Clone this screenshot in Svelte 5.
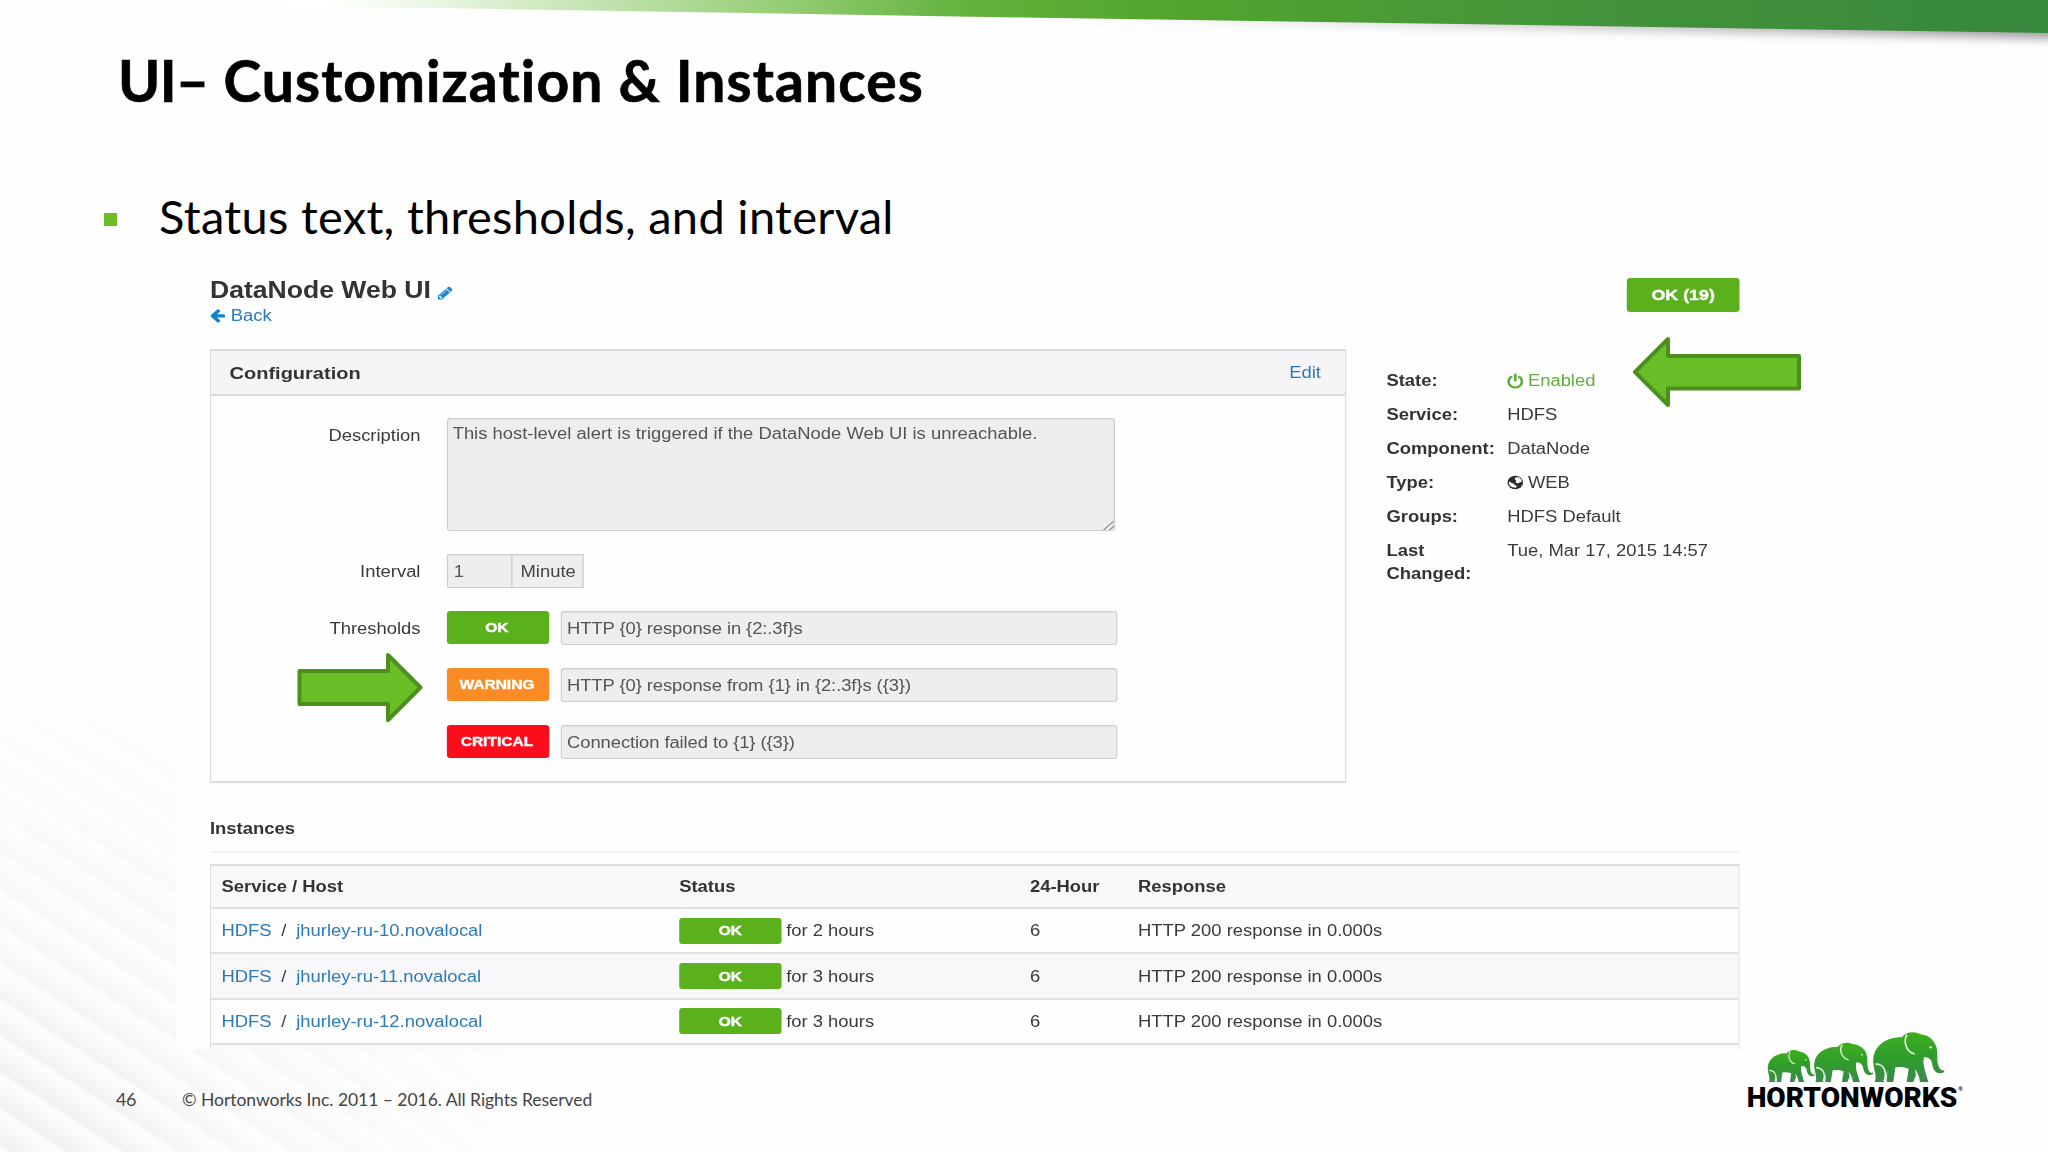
<script>
  // alert definition properties
  const details = [
    { label: 'State:', value: 'Enabled', icon: 'power' },
    { label: 'Service:', value: 'HDFS' },
    { label: 'Component:', value: 'DataNode' },
    { label: 'Type:', value: 'WEB', icon: 'globe' },
    { label: 'Groups:', value: 'HDFS Default' },
    { label: 'Last Changed:', value: 'Tue, Mar 17, 2015 14:57' }
  ];

  const thresholds = [
    { level: 'OK', cls: 'ok', text: 'HTTP {0} response in {2:.3f}s' },
    { level: 'WARNING', cls: 'warning', text: 'HTTP {0} response from {1} in {2:.3f}s ({3})' },
    { level: 'CRITICAL', cls: 'critical', text: 'Connection failed to {1} ({3})' }
  ];

  const instances = [
    { service: 'HDFS', host: 'jhurley-ru-10.novalocal', age: 'for 2 hours', count: 6, response: 'HTTP 200 response in 0.000s' },
    { service: 'HDFS', host: 'jhurley-ru-11.novalocal', age: 'for 3 hours', count: 6, response: 'HTTP 200 response in 0.000s' },
    { service: 'HDFS', host: 'jhurley-ru-12.novalocal', age: 'for 3 hours', count: 6, response: 'HTTP 200 response in 0.000s' }
  ];

  // small, medium and large elephant of the logo
  const herd = [
    'translate(-160 78) scale(.66 .64)',
    'translate(-99 46.5) scale(.83 .79)',
    'translate(0 2)'
  ];
</script>

<div class="slide">
  <div class="stripes"></div>
  <svg class="band" viewBox="0 0 2048 60" width="2048" height="60">
    <defs>
      <linearGradient id="bandFill" x1="0" x2="1">
        <stop offset=".16" stop-color="#fff" />
        <stop offset=".22" stop-color="#e6f4de" />
        <stop offset=".3" stop-color="#bfe2aa" />
        <stop offset=".39" stop-color="#91cb70" />
        <stop offset=".46" stop-color="#68b544" />
        <stop offset=".5" stop-color="#5cae35" />
        <stop offset=".57" stop-color="#52a52e" />
        <stop offset=".75" stop-color="#45953a" />
        <stop offset="1" stop-color="#37873d" />
      </linearGradient>
      <linearGradient id="shadeFill" x1="0" x2="1">
        <stop offset=".15" stop-color="#777" stop-opacity="0" />
        <stop offset="1" stop-color="#6c666e" stop-opacity=".65" />
      </linearGradient>
      <filter id="soft" x="-5%" y="-100%" width="110%" height="300%"><feGaussianBlur stdDeviation="5" /></filter>
    </defs>
    <path d="M900 0H2060V39L900 18z" fill="url(#shadeFill)" filter="url(#soft)" />
    <path d="M0 0H2048V33L1024 17.500L0 1z" fill="url(#bandFill)" />
  </svg>

  <h1><span>UI–</span> Customization &amp; Instances</h1>
  <p class="bullet"><i></i><span>Status text, thresholds, and interval</span></p>

  <section class="shot">
    <div class="panel">
      <header class="top">
        <div>
          <h2>
            DataNode Web UI
            <svg viewBox="0 100 1536 1600" width="13" height="16"><path fill="#1c87cf" fill-rule="evenodd" d="M363 1536l91-91-235-235-91 91v107h128v128h107zm523-928q0-22-22-22-10 0-17 7l-542 542q-7 7-7 17 0 22 22 22 10 0 17-7l542-542q7-7 7-17zm-54-192l416 416-832 832h-416v-416zm683 96q0 53-37 90l-166 166-416-416 166-165q36-38 90-38 53 0 91 38l235 234q37 39 37 91z" /></svg>
          </h2>
          <a class="back" href="#back">
            <svg viewBox="0 250 1536 1450" width="13" height="14"><path fill="#0f84cd" d="M1536 896v128q0 53-32.500 90.500t-84.500 37.500h-704l293 294q38 36 38 90t-38 90l-75 76q-37 37-90 37-52 0-91-37l-651-652q-37-37-37-90 0-52 37-91l651-650q38-38 91-38 52 0 90 38l75 74q38 38 38 91t-38 91l-293 293h704q52 0 84.500 37.500t32.500 90.500z" /></svg>
            Back
          </a>
        </div>
        <span class="badge total">OK (19)</span>
      </header>

      <div class="columns">
        <div class="box">
          <div class="box-head"><h3>Configuration</h3><a href="#edit">Edit</a></div>
          <div class="form">
            <div class="row first">
              <span class="label">Description</span>
              <div class="field area">
                This host-level alert is triggered if the DataNode Web UI is unreachable.
                <svg class="grip" viewBox="0 0 10 10" width="10" height="10"><path d="M1 10L10 1M6 10L10 6" stroke="#777" fill="none" /></svg>
              </div>
            </div>
            <div class="row interval">
              <span class="label">Interval</span>
              <div class="field num">1</div>
              <div class="field unit">Minute</div>
            </div>
            {#each thresholds as t, i}
              <div class="row threshold">
                <span class="label">{i === 0 ? 'Thresholds' : ''}</span>
                <span class="badge {t.cls}">{t.level}</span>
                <div class="field text">{t.text}</div>
              </div>
            {/each}
          </div>
        </div>

        <dl>
          {#each details as d}
            <dt>{d.label}</dt>
            <dd class:enabled={d.icon === 'power'}>
              {#if d.icon === 'power'}
                <svg viewBox="0 0 1536 1664" width="14" height="16"><path fill="currentColor" d="M1536 896q0 156-61 298t-164 245-245 164-298 61-298-61-245-164-164-245-61-298q0-182 80.500-343t226.500-270q43-32 95.500-25t83.500 50q32 42 24.500 94.500t-49.500 84.500q-98 74-151.500 181t-53.500 228q0 104 40.500 198.500t109.500 163.500 163.500 109.500 198.500 40.500 198.500-40.500 163.500-109.500 109.500-163.500 40.500-198.500q0-121-53.500-228t-151.500-181q-42-32-49.500-84.500t24.500-94.500q31-43 84-50t95 25q146 109 226.500 270t80.500 343zm-640-768v640q0 52-38 90t-90 38-90-38-38-90v-640q0-52 38-90t90-38 90 38 38 90z" /></svg>
              {:else if d.icon === 'globe'}
                <svg viewBox="0 0 16 16" width="14" height="15">
                  <circle cx="8" cy="8" r="7.800" fill="#2e2e30" />
                  <path fill="#fff" d="M8 2.200L11.500 2L14 4.600L14.500 7.500L12.500 7.600L10.800 9.200L8.300 8L9 5.600L7.600 4.600zM1.700 6.800L3.600 8L6.500 9.300L7.500 10.800L9.800 12.200L8.500 14L5.400 13.500L3 12L1.700 9.400z" />
                </svg>
              {/if}
              {d.value}
            </dd>
          {/each}
        </dl>
      </div>

      <h4>Instances</h4>
      <div class="table">
        <div class="tr th"><span>Service / Host</span><span>Status</span><span>24-Hour</span><span>Response</span></div>
        {#each instances as r}
          <div class="tr">
            <span><a href="#service">{r.service}</a><em>/</em><a href="#host">{r.host}</a></span>
            <span class="status"><b class="badge small">OK</b>{r.age}</span>
            <span>{r.count}</span>
            <span>{r.response}</span>
          </div>
        {/each}
        <div class="cut"></div>
      </div>
    </div>
  </section>

  <footer>
    <span class="page">46</span>
    <span class="copy">© Hortonworks Inc. 2011 – 2016. All Rights Reserved</span>
    <svg class="logo" viewBox="75 55 690 270" width="230" height="90">
      <defs>
        <linearGradient id="hide" x1="0" y1="0" x2="0" y2="1">
          <stop offset="0" stop-color="#3eae1c" />
          <stop offset=".5" stop-color="#2f9d2b" />
          <stop offset="1" stop-color="#3a8a4c" />
        </linearGradient>
      </defs>
      {#each herd as place}
        <g transform={place}>
          <path fill="url(#hide)" d="M464 212C474 192 456 168 460 140C466 100 500 78 546 78C556 62 582 58 602 69C634 72 654 98 652 132C651 156 656 180 672 177L673 182C656 192 640 182 637 160C635 145 626 136 612 138C606 160 618 186 625 212H600C598 196 592 182 584 174L588 190L580 212H560L566 172C552 166 538 166 526 168L520 212H500L502 178L494 212z" />
          <path fill="none" stroke="#e9f7dd" stroke-width="5" d="M561 70C548 92 560 122 584 128M466 158C494 158 502 184 492 210" />
          <circle cx="632" cy="108" r="3.500" fill="#e9f7dd" />
        </g>
      {/each}
      <text x="80" y="290" textLength="632" lengthAdjust="spacingAndGlyphs">HORTONWORKS</text>
      <text class="reg" x="715" y="242">®</text>
    </svg>
  </footer>

  <!-- callout arrows -->
  <svg class="arrow state" viewBox="0 0 172 74" width="172" height="74"><path d="M5 37L38 4V21H169V53.500H38V70z" /></svg>
  <svg class="arrow level" viewBox="0 0 130 74" width="130" height="74"><path d="M4.500 21H93V5L125.500 37.500L93 70V54H4.500z" /></svg>
</div>

<style>
  :global(body) { background: #fefefe; }

  .slide {
    position: relative; width: 2048px; height: 1152px; overflow: hidden;
    display: flex; flex-direction: column; box-sizing: border-box;
    background: #fefefe; font-family: Lato, sans-serif; color: #000;
    font-variant-ligatures: none;
  }
  .slide > * { flex: none; }
  a { color: #2b7bb9; text-decoration: none; }

  /* background decoration */
  .stripes {
    position: absolute; left: 0; bottom: 0; width: 640px; height: 520px;
    background: repeating-linear-gradient(33deg, #f1f1f1 8px, #f6f6f6 18px, #fdfdfd 33px, #fafafa 35px, #f1f1f1 38.700px);
    -webkit-mask-image: radial-gradient(ellipse 560px 500px at 0 100%, #000 15%, rgba(0,0,0,.5) 50%, transparent 98%);
    mask-image: radial-gradient(ellipse 560px 500px at 0 100%, #000 15%, rgba(0,0,0,.5) 50%, transparent 98%);
  }
  .band { position: absolute; left: 0; top: 0; }

  h1 {
    position: relative; margin: 44px 0 0 118px; height: 72px; line-height: 72px;
    font-size: 57px; font-weight: 700; letter-spacing: 1.100px; white-space: nowrap;
    -webkit-text-stroke: .7px #000;
  }
  h1 span { letter-spacing: -.6px; }
  .bullet {
    position: relative; display: flex; align-items: center; gap: 42px;
    margin: 70px 0 0 104px; height: 60px; font-size: 47px; letter-spacing: .3px; white-space: nowrap;
  }
  .bullet i { width: 13px; height: 13px; margin-top: 7px; background: #69be28; }

  /* console capture, wider than its natural proportions */
  .shot {
    position: relative; margin: 19px 0 0 176px; width: 1590px; height: 784px;
    overflow: hidden; background: #fefefe;
  }
  .panel {
    margin-left: 34px; width: 1330px; transform: scaleX(1.15); transform-origin: 0 0;
    font: 16px/23px "Liberation Sans", Arial, sans-serif; color: #3a3a3c;
  }

  .top { display: flex; justify-content: space-between; height: 84px; }
  h2 { margin: 12px 0 0; font-size: 23.100px; line-height: 27px; color: #333; }
  h2 svg { margin-left: 0; vertical-align: -3px; }
  .back { display: flex; align-items: center; gap: 5px; height: 23px; }

  .badge {
    display: flex; align-items: center; justify-content: center; box-sizing: border-box;
    width: 89px; height: 33px; padding: 0 2px 1px 0; border-radius: 3px; background: #5ab11c;
    color: #fff; font-size: 13.5px; font-weight: 700; -webkit-text-stroke: .4px #fff;
  }
  .badge.total { width: 98px; height: 34px; margin-top: 13px; padding-right: 0; font-size: 15.500px; }
  .badge.warning { background: #fa8c25; }
  .badge.critical { background: #fb0d1b; }
  .badge.small { height: 26px; width: 89px; margin-right: 4px; padding: 0; }

  .columns { display: flex; gap: 35px; height: 434px; }
  .box { width: 988px; box-sizing: border-box; border: 2px solid #dcdcdf; border-width: 2px 1.500px; }
  .box-head {
    display: flex; justify-content: space-between; align-items: center;
    height: 43px; padding: 0 21px 0 16px; background: #f5f5f7; border-bottom: 2px solid #dcdcdf;
  }
  h3 { margin: 1px 0 0; font-size: 17.400px; color: #333; }

  .row { display: flex; height: 33px; margin-bottom: 24px; }
  .row.first { height: 113px; margin: 22px 0 23px; }
  .label { width: 182px; margin-right: 23px; text-align: right; line-height: 35px; }
  .field {
    box-sizing: border-box; border: 1.500px solid #cdcdd0; border-radius: 3px;
    background: #eeedef; color: #555; padding: 0 5px; line-height: 33px; height: 34px;
    box-shadow: inset 0 1px 1px rgba(0,0,0,.05);
  }
  .area { position: relative; width: 581px; height: 113px; padding: 3px 4px; line-height: 24px; }
  .grip { position: absolute; right: 0; bottom: 0; }
  .num { width: 57px; border-radius: 2px 0 0 2px; }
  .unit { width: 63px; margin-left: -1px; padding: 0 7px; border-radius: 0; color: #444; }
  .text { width: 484px; margin-left: 10px; padding: 0 4.500px; letter-spacing: -.07px; }

  dl {
    display: grid; grid-template-columns: 105px 200px; align-content: start;
    margin: 20px 0 0; row-gap: 11px;
  }
  dt { width: 84px; font-weight: 700; color: #333; }
  dd { display: flex; align-items: center; gap: 4px; margin: 0; height: 23px; }
  .enabled { color: #5fae3c; }

  h4 { margin: 34px 0 0; height: 34px; line-height: 23px; font-size: 16px; color: #333; border-bottom: 2px solid #f3f3f5; }
  .table { margin-top: 11px; border: 1.500px solid #dcdcdf; border-top-width: 2px; border-bottom: 0; box-sizing: border-box; }
  .tr {
    display: grid; grid-template-columns: 398px 305px 94px 1fr; align-items: center;
    height: 43.400px; padding-left: 9px; border-bottom: 2px solid #e0e0e3; box-sizing: content-box;
  }
  .tr:nth-child(odd) { background: #f8f8fa; }
  .tr.th { height: 41px; font-weight: 700; color: #333; }
  .tr:not(.th):nth-child(even) { background: #fefefe; }
  .tr em { font-style: normal; margin: 0 8.500px; }
  .status { display: flex; align-items: center; }
  .cut { height: 6px; background: #f8f8fa; }

  footer { position: relative; display: flex; align-items: flex-start; height: 100px; font-size: 17.500px; color: #444; }
  .page { width: 66px; margin: 39px 0 0 116px; font-size: 18px; letter-spacing: -.5px; }
  .copy { margin-top: 40px; white-space: nowrap; letter-spacing: -.04px; }
  .logo { position: absolute; left: 1745px; top: -20px; }
  .logo text { font: 900 84px Roboto, sans-serif; fill: #000; }
  .logo .reg { font: 700 18px "Liberation Sans", sans-serif; }

  .arrow { position: absolute; }
  .arrow path { fill: #69be28; stroke: #4b8f1c; stroke-width: 4; stroke-linejoin: round; }
  .arrow.state { left: 1629.500px; top: 335px; }
  .arrow.level { left: 295px; top: 650px; }
</style>
